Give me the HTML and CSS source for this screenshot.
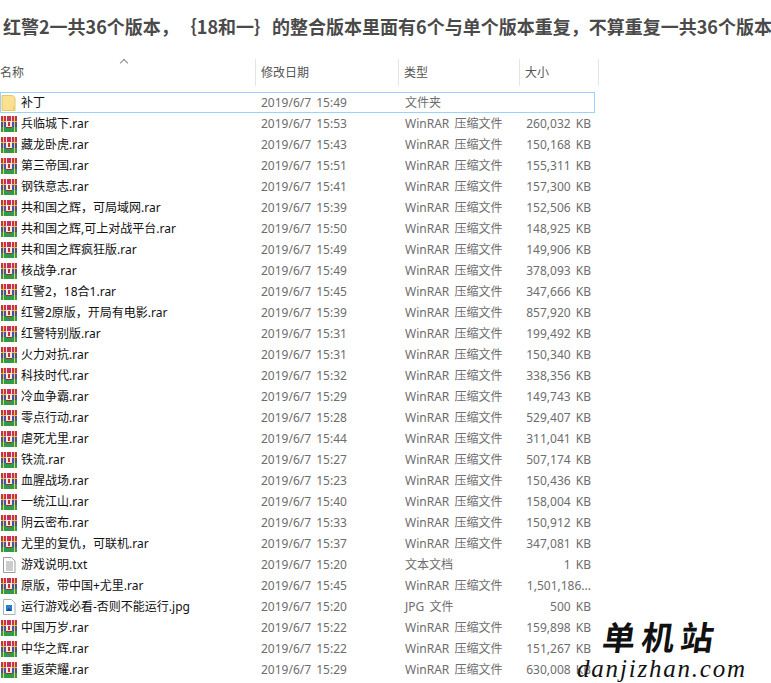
FILE: index.html
```html
<!DOCTYPE html>
<html lang="zh-CN">
<head>
<meta charset="utf-8">
<title>红警2</title>
<link rel="stylesheet" href="styles.css">
</head>
<body>
<svg class="defs" width="0" height="0" aria-hidden="true">
  <symbol id="rar" viewBox="0 0 16 16">
    <rect x="0" y="0" width="16" height="5" fill="#c8304f"/>
    <rect x="0" y="5" width="16" height="6" fill="#4b4fa8"/>
    <rect x="0" y="11" width="16" height="5" fill="#2f9a4a"/>
    <rect x="2" y="0" width="1" height="16" fill="#e8d060"/>
    <rect x="13" y="0" width="1" height="16" fill="#e8d060"/>
    <rect x="5" y="0" width="1" height="5" fill="#f0e0e0"/>
    <rect x="10" y="0" width="1" height="5" fill="#f0e0e0"/>
    <rect x="0" y="5" width="5" height="1" fill="#e8c040"/>
    <rect x="11" y="5" width="5" height="1" fill="#e8c040"/>
    <rect x="5" y="5" width="6" height="6" fill="#f4ead8"/>
    <rect x="7" y="6" width="2" height="4" fill="#c03030"/>
    <rect x="5" y="11" width="6" height="1" fill="#a03030"/>
  </symbol>
  <symbol id="folder" viewBox="0 0 16 16">
    <path d="M1 .5h10.500l2.500 2V15.500H1z" fill="#fbe08f" stroke="#e6c766"/>
    <path d="M12 15v-4h2v4z" fill="#f3cd6a"/>
  </symbol>
  <symbol id="txt" viewBox="0 0 16 16">
    <path d="M2.500.5h8l3.500 3.500v11.500H2.500z" fill="#fff" stroke="#9a9a9a"/>
    <path d="M5 5h7M5 7h7M5 9h7M5 11h7M5 13h7" stroke="#9a9a9a"/>
  </symbol>
  <symbol id="jpg" viewBox="0 0 16 16">
    <path d="M2.500.5h8l3.500 3.500v11.500H2.500z" fill="#fff" stroke="#a8b0b8"/>
    <rect x="5" y="6" width="6" height="6" fill="#2a7fd0"/>
    <path d="M5 12l3-3 3 3z" fill="#0f4f90"/>
  </symbol>
</svg>

<h1 class="title">红警2一共36个版本，｛18和一｝的整合版本里面有6个与单个版本重复，不算重复一共36个版本</h1>

<div class="explorer">
  <div class="header">
    <span class="sort-caret"></span>
    <div class="hcell">名称</div>
    <div class="hcell">修改日期</div>
    <div class="hcell">类型</div>
    <div class="hcell">大小</div>
  </div>
  <div class="list">
    <div class="row selected"><div class="name"><svg class="icon"><use href="#folder"/></svg>补丁</div><div class="cell">2019/6/7 15:49</div><div class="cell">文件夹</div><div class="cell size"></div></div>
    <div class="row"><div class="name"><svg class="icon"><use href="#rar"/></svg>兵临城下.rar</div><div class="cell">2019/6/7 15:53</div><div class="cell">WinRAR 压缩文件</div><div class="cell size">260,032 KB</div></div>
    <div class="row"><div class="name"><svg class="icon"><use href="#rar"/></svg>藏龙卧虎.rar</div><div class="cell">2019/6/7 15:43</div><div class="cell">WinRAR 压缩文件</div><div class="cell size">150,168 KB</div></div>
    <div class="row"><div class="name"><svg class="icon"><use href="#rar"/></svg>第三帝国.rar</div><div class="cell">2019/6/7 15:51</div><div class="cell">WinRAR 压缩文件</div><div class="cell size">155,311 KB</div></div>
    <div class="row"><div class="name"><svg class="icon"><use href="#rar"/></svg>钢铁意志.rar</div><div class="cell">2019/6/7 15:41</div><div class="cell">WinRAR 压缩文件</div><div class="cell size">157,300 KB</div></div>
    <div class="row"><div class="name"><svg class="icon"><use href="#rar"/></svg>共和国之辉，可局域网.rar</div><div class="cell">2019/6/7 15:39</div><div class="cell">WinRAR 压缩文件</div><div class="cell size">152,506 KB</div></div>
    <div class="row"><div class="name"><svg class="icon"><use href="#rar"/></svg>共和国之辉,可上对战平台.rar</div><div class="cell">2019/6/7 15:50</div><div class="cell">WinRAR 压缩文件</div><div class="cell size">148,925 KB</div></div>
    <div class="row"><div class="name"><svg class="icon"><use href="#rar"/></svg>共和国之辉疯狂版.rar</div><div class="cell">2019/6/7 15:49</div><div class="cell">WinRAR 压缩文件</div><div class="cell size">149,906 KB</div></div>
    <div class="row"><div class="name"><svg class="icon"><use href="#rar"/></svg>核战争.rar</div><div class="cell">2019/6/7 15:49</div><div class="cell">WinRAR 压缩文件</div><div class="cell size">378,093 KB</div></div>
    <div class="row"><div class="name"><svg class="icon"><use href="#rar"/></svg>红警2，18合1.rar</div><div class="cell">2019/6/7 15:45</div><div class="cell">WinRAR 压缩文件</div><div class="cell size">347,666 KB</div></div>
    <div class="row"><div class="name"><svg class="icon"><use href="#rar"/></svg>红警2原版，开局有电影.rar</div><div class="cell">2019/6/7 15:39</div><div class="cell">WinRAR 压缩文件</div><div class="cell size">857,920 KB</div></div>
    <div class="row"><div class="name"><svg class="icon"><use href="#rar"/></svg>红警特别版.rar</div><div class="cell">2019/6/7 15:31</div><div class="cell">WinRAR 压缩文件</div><div class="cell size">199,492 KB</div></div>
    <div class="row"><div class="name"><svg class="icon"><use href="#rar"/></svg>火力对抗.rar</div><div class="cell">2019/6/7 15:31</div><div class="cell">WinRAR 压缩文件</div><div class="cell size">150,340 KB</div></div>
    <div class="row"><div class="name"><svg class="icon"><use href="#rar"/></svg>科技时代.rar</div><div class="cell">2019/6/7 15:32</div><div class="cell">WinRAR 压缩文件</div><div class="cell size">338,356 KB</div></div>
    <div class="row"><div class="name"><svg class="icon"><use href="#rar"/></svg>冷血争霸.rar</div><div class="cell">2019/6/7 15:29</div><div class="cell">WinRAR 压缩文件</div><div class="cell size">149,743 KB</div></div>
    <div class="row"><div class="name"><svg class="icon"><use href="#rar"/></svg>零点行动.rar</div><div class="cell">2019/6/7 15:28</div><div class="cell">WinRAR 压缩文件</div><div class="cell size">529,407 KB</div></div>
    <div class="row"><div class="name"><svg class="icon"><use href="#rar"/></svg>虐死尤里.rar</div><div class="cell">2019/6/7 15:44</div><div class="cell">WinRAR 压缩文件</div><div class="cell size">311,041 KB</div></div>
    <div class="row"><div class="name"><svg class="icon"><use href="#rar"/></svg>铁流.rar</div><div class="cell">2019/6/7 15:27</div><div class="cell">WinRAR 压缩文件</div><div class="cell size">507,174 KB</div></div>
    <div class="row"><div class="name"><svg class="icon"><use href="#rar"/></svg>血腥战场.rar</div><div class="cell">2019/6/7 15:23</div><div class="cell">WinRAR 压缩文件</div><div class="cell size">150,436 KB</div></div>
    <div class="row"><div class="name"><svg class="icon"><use href="#rar"/></svg>一统江山.rar</div><div class="cell">2019/6/7 15:40</div><div class="cell">WinRAR 压缩文件</div><div class="cell size">158,004 KB</div></div>
    <div class="row"><div class="name"><svg class="icon"><use href="#rar"/></svg>阴云密布.rar</div><div class="cell">2019/6/7 15:33</div><div class="cell">WinRAR 压缩文件</div><div class="cell size">150,912 KB</div></div>
    <div class="row"><div class="name"><svg class="icon"><use href="#rar"/></svg>尤里的复仇，可联机.rar</div><div class="cell">2019/6/7 15:37</div><div class="cell">WinRAR 压缩文件</div><div class="cell size">347,081 KB</div></div>
    <div class="row"><div class="name"><svg class="icon"><use href="#txt"/></svg>游戏说明.txt</div><div class="cell">2019/6/7 15:20</div><div class="cell">文本文档</div><div class="cell size">1 KB</div></div>
    <div class="row"><div class="name"><svg class="icon"><use href="#rar"/></svg>原版，带中国+尤里.rar</div><div class="cell">2019/6/7 15:45</div><div class="cell">WinRAR 压缩文件</div><div class="cell size">1,501,186...</div></div>
    <div class="row"><div class="name"><svg class="icon"><use href="#jpg"/></svg>运行游戏必看-否则不能运行.jpg</div><div class="cell">2019/6/7 15:20</div><div class="cell">JPG 文件</div><div class="cell size">500 KB</div></div>
    <div class="row"><div class="name"><svg class="icon"><use href="#rar"/></svg>中国万岁.rar</div><div class="cell">2019/6/7 15:22</div><div class="cell">WinRAR 压缩文件</div><div class="cell size">159,898 KB</div></div>
    <div class="row"><div class="name"><svg class="icon"><use href="#rar"/></svg>中华之辉.rar</div><div class="cell">2019/6/7 15:22</div><div class="cell">WinRAR 压缩文件</div><div class="cell size">151,267 KB</div></div>
    <div class="row"><div class="name"><svg class="icon"><use href="#rar"/></svg>重返荣耀.rar</div><div class="cell">2019/6/7 15:29</div><div class="cell">WinRAR 压缩文件</div><div class="cell size">630,008 KB</div></div>
  </div>
</div>

<div class="watermark">
  <div class="wm-cn">单机站</div>
  <div class="wm-en">danjizhan.com</div>
</div>
</body>
</html>
```

FILE: styles.css
```css
html, body {
  margin: 0;
  padding: 0;
  background: #fff;
  height: 683px;
  overflow: hidden;
}
body {
  position: relative;
  font-family: "Noto Sans", "Noto Sans CJK SC", sans-serif;
  font-size: 12px;
}
.defs {
  position: absolute;
}
.title {
  margin: 0;
  padding: 13px 0 0 3px;
  height: 42px;
  box-sizing: border-box;
  width: 771px;
  white-space: nowrap;
  overflow: hidden;
  font-family: "Noto Sans CJK SC", sans-serif;
  font-size: 18px;
  line-height: 27px;
  font-weight: 700;
  color: #4a4a4a;
  text-spacing-trim: space-all;
  font-feature-settings: "chws" 0, "halt" 0;
}
.explorer {
  width: 600px;
}
.header {
  position: relative;
  display: grid;
  grid-template-columns: 256px 143px 121px 79px;
  height: 27px;
  margin-top: 17px;
  margin-bottom: 6px;
}
.sort-caret {
  position: absolute;
  left: 121px;
  top: 1px;
  width: 5px;
  height: 5px;
  border-left: 1px solid #888;
  border-top: 1px solid #888;
  transform: rotate(45deg);
}
.hcell {
  border-right: 1px solid #e5e5e5;
  padding-left: 5px;
  line-height: 27px;
  color: #555;
  white-space: nowrap;
}
.hcell:first-of-type {
  padding-left: 0;
}
.list {
  display: flex;
  flex-direction: column;
}
.row {
  display: grid;
  grid-template-columns: 256px 144px 120px 71px;
  height: 21px;
  line-height: 21px;
  width: 595px;
  box-sizing: border-box;
  white-space: nowrap;
}
.row.selected {
  outline: 1px solid #99d1ff;
  outline-offset: -1px;
}
.name {
  display: flex;
  align-items: center;
  gap: 4px;
  padding-left: 1px;
  color: #111;
  overflow: hidden;
}
.icon {
  width: 16px;
  height: 16px;
  flex: none;
}
.cell {
  padding-left: 5px;
  color: #6d6d6d;
  overflow: hidden;
  word-spacing: 2px;
}
.size {
  padding-left: 0;
  text-align: right;
}
.watermark {
  position: absolute;
  left: 577px;
  bottom: 0;
  width: 194px;
  color: #111;
}
.wm-cn {
  margin-left: 26px;
  font-family: "Noto Sans CJK SC", sans-serif;
  font-size: 33px;
  line-height: 38px;
  font-weight: 700;
  letter-spacing: 6px;
  transform: skewX(-8deg);
}
.wm-en {
  font-family: "Liberation Serif", serif;
  font-style: italic;
  font-size: 25px;
  line-height: 28px;
  letter-spacing: 1.800px;
  white-space: nowrap;
}
```
